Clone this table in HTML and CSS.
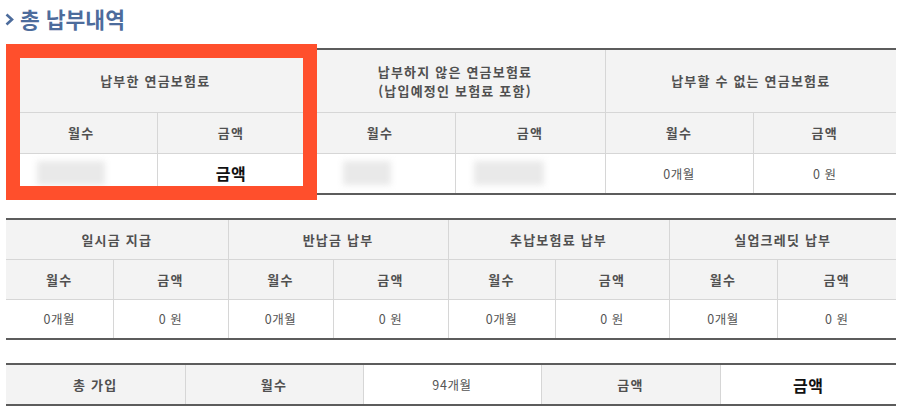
FILE: index.html
```html
<!DOCTYPE html>
<html lang="ko">
<head>
<meta charset="utf-8">
<link rel="stylesheet" href="styles.css">
</head>
<body>
<div class="page">
  <h2 class="title"><svg class="chev" width="9" height="13" viewBox="0 0 9 13"><path d="M1.5 1.5 L7 6.5 L1.5 11.5" fill="none" stroke="currentColor" stroke-width="2.6"/></svg>총 납부내역</h2>

  <div class="wrap">
    <table class="tbl t1">
      <colgroup><col class="w151"><col class="w148"><col class="w150"><col class="w150"><col class="w148"><col class="w143"></colgroup>
      <tr class="r-group">
        <th colspan="2">납부한 연금보험료</th>
        <th colspan="2">납부하지 않은 연금보험료<br>(납입예정인 보험료 포함)</th>
        <th colspan="2">납부할 수 없는 연금보험료</th>
      </tr>
      <tr class="r-sub">
        <th>월수</th><th>금액</th><th>월수</th><th>금액</th><th>월수</th><th>금액</th>
      </tr>
      <tr class="r-data">
        <td><div class="blur b1"></div></td>
        <td class="big">금액</td>
        <td><div class="blur b3"></div></td>
        <td><div class="blur b4"></div></td>
        <td>0개월</td>
        <td>0 원</td>
      </tr>
    </table>
    <div class="highlight"></div>
  </div>

  <table class="tbl t2">
    <colgroup><col class="w107"><col class="w115"><col class="w105"><col class="w115"><col class="w107"><col class="w114"><col class="w108"><col class="w119"></colgroup>
    <tr class="r-row">
      <th colspan="2">일시금 지급</th>
      <th colspan="2">반납금 납부</th>
      <th colspan="2">추납보험료 납부</th>
      <th colspan="2">실업크레딧 납부</th>
    </tr>
    <tr class="r-row">
      <th>월수</th><th>금액</th><th>월수</th><th>금액</th><th>월수</th><th>금액</th><th>월수</th><th>금액</th>
    </tr>
    <tr class="r-row">
      <td>0개월</td><td>0 원</td><td>0개월</td><td>0 원</td><td>0개월</td><td>0 원</td><td>0개월</td><td>0 원</td>
    </tr>
  </table>

  <table class="tbl t3">
    <colgroup><col class="w179"><col class="w178"><col class="w178"><col class="w179"><col class="w176"></colgroup>
    <tr class="r-total">
      <th>총 가입</th>
      <th>월수</th>
      <td>94개월</td>
      <th>금액</th>
      <td class="big">금액</td>
    </tr>
  </table>
</div>
</body>
</html>
```

FILE: styles.css
```css
* { box-sizing: border-box; }
html, body { margin: 0; padding: 0; background: #fff; }
body {
  font-family: "Noto Sans CJK KR", "Noto Sans", sans-serif;
  color: #555;
}
.page { width: 903px; height: 418px; padding: 0; }

.title {
  margin: 0;
  height: 48px;
  padding: 4px 0 0 4px;
  font-size: 21.5px;
  font-weight: 700;
  line-height: 30px;
  color: #4d6c9c;
  display: flex;
  align-items: flex-start;
}
.chev {
  flex: none;
  margin: 9px 6px 0 1px;
}

.wrap { position: relative; }

.tbl {
  margin-left: 6px;
  width: 890px;
  border-collapse: collapse;
  table-layout: fixed;
  border-top: 2px solid #5c5c5c;
  border-bottom: 2px solid #5c5c5c;
}
.w105 { width: 105px; } .w107 { width: 107px; } .w108 { width: 108px; }
.w114 { width: 114px; } .w115 { width: 115px; } .w119 { width: 119px; }
.w143 { width: 143px; } .w148 { width: 148px; } .w150 { width: 150px; }
.w151 { width: 151px; } .w176 { width: 176px; } .w178 { width: 178px; }
.w179 { width: 179px; }

.tbl th, .tbl td {
  border: 1px solid #d6d6d6;
  text-align: center;
  vertical-align: middle;
  padding: 0;
  font-size: 13px;
  letter-spacing: 1.2px;
}
.tbl tr > :first-child { border-left: none; }
.tbl tr > :last-child { border-right: none; }
.tbl tr:first-child > * { border-top: none; }
.tbl tr:last-child > * { border-bottom: none; }

.tbl th {
  background: #f3f3f3;
  font-weight: 700;
  color: #505050;
  line-height: 19px;
}
.tbl td {
  background: #fff;
  font-weight: 400;
  color: #555;
  font-size: 12.5px;
  letter-spacing: 0.6px;
}
.tbl td.big {
  font-size: 16px;
  font-weight: 700;
  color: #111;
  letter-spacing: 0.5px;
}

.t1 .r-group { height: 63px; }
.t1 .r-sub { height: 41px; }
.t1 .r-data { height: 41px; }

.t2 { margin-top: 23px; }
.t2 .r-row { height: 40px; }

.t3 { margin-top: 23px; }
.t3 .r-total { height: 41px; }

.blur {
  margin: 0 auto;
  height: 24px;
  background: #e9e9e9;
  filter: blur(3px);
}
.b1 { width: 68px; margin-left: 31px; }
.b3 { width: 48px; margin-left: 37px; }
.b4 { width: 70px; margin-left: 18px; }

.highlight {
  position: absolute;
  left: 6px;
  top: -4px;
  width: 311px;
  height: 156px;
  border: 14px solid #ff4f2c;
}
```
